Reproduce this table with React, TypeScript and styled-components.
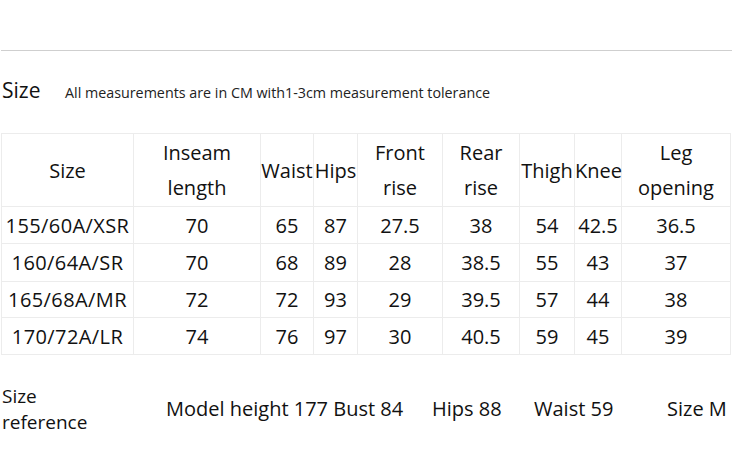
import React from "react";
import styled, { createGlobalStyle } from "styled-components";

const Global = createGlobalStyle`
  html, body { margin: 0; padding: 0; background: #fff; }
  body { font-family: "Open Sans", "Noto Sans", sans-serif; color: #111; }
`;

const Page = styled.div`
  width: 732px;
  height: 459px;
  padding-top: 50px;
  box-sizing: border-box;
  overflow: hidden;
`;

const Rule = styled.div`
  margin-left: 1px;
  height: 1px;
  background: #cfcfcf;
`;

const TitleRow = styled.div`
  display: flex;
  align-items: baseline;
  height: 82px;
  padding-top: 25px;
  box-sizing: border-box;
  padding-left: 2px;
`;

const Title = styled.span`
  font-size: 21px;
  width: 63px;
`;

const Note = styled.span`
  font-size: 14.3px;
  color: #222;
`;

const Table = styled.table`
  margin-left: 1px;
  border-collapse: collapse;
  table-layout: fixed;
  width: 729px;
  font-size: 20px;
  td, th {
    border: 1px solid #ececec;
    padding: 0;
    text-align: center;
    font-weight: 400;
    white-space: nowrap;
  }
`;

const HeadRow = styled.tr`
  height: 73px;
  th { line-height: 35px; }
`;

const BodyRow = styled.tr<{ $h: number }>`
  height: ${(p) => p.$h}px;
`;

const SizeCell = styled.td`
  letter-spacing: 0.4px;
`;

const Footer = styled.div`
  display: grid;
  grid-template-columns: 164px 266px 102px 133px 1fr;
  align-items: center;
  margin-top: 28px;
  padding-left: 2px;
  font-size: 20px;
`;

const FootLabel = styled.div`
  display: flex;
  flex-direction: column;
  line-height: 26px;
  font-size: 19px;
`;

const FootCell = styled.div`
  line-height: 24px;
  white-space: nowrap;
`;

const cols = [132, 127, 53, 44, 85, 77, 55, 47, 109];
const headers = [
  ["Size"],
  ["Inseam", "length"],
  ["Waist"],
  ["Hips"],
  ["Front", "rise"],
  ["Rear", "rise"],
  ["Thigh"],
  ["Knee"],
  ["Leg", "opening"],
];
const rows = [
  ["155/60A/XSR", "70", "65", "87", "27.5", "38", "54", "42.5", "36.5"],
  ["160/64A/SR", "70", "68", "89", "28", "38.5", "55", "43", "37"],
  ["165/68A/MR", "72", "72", "93", "29", "39.5", "57", "44", "38"],
  ["170/72A/LR", "74", "76", "97", "30", "40.5", "59", "45", "39"],
];
const heights = [37, 38, 36, 37];

export default function App() {
  return (
    <Page>
      <Global />
      <Rule />
      <TitleRow>
        <Title>Size</Title>
        <Note>All measurements are in CM with1-3cm measurement tolerance</Note>
      </TitleRow>
      <Table>
        <colgroup>
          {cols.map((w, i) => (
            <col key={i} style={{ width: w }} />
          ))}
        </colgroup>
        <thead>
          <HeadRow>
            {headers.map((h, i) => (
              <th key={i}>
                {h.map((l, j) => (
                  <div key={j}>{l}</div>
                ))}
              </th>
            ))}
          </HeadRow>
        </thead>
        <tbody>
          {rows.map((r, i) => (
            <BodyRow key={i} $h={heights[i]}>
              <SizeCell>{r[0]}</SizeCell>
              {r.slice(1).map((c, j) => (
                <td key={j}>{c}</td>
              ))}
            </BodyRow>
          ))}
        </tbody>
      </Table>
      <Footer>
        <FootLabel>
          <span>Size</span>
          <span>reference</span>
        </FootLabel>
        <FootCell>Model height 177 Bust 84</FootCell>
        <FootCell>Hips 88</FootCell>
        <FootCell>Waist 59</FootCell>
        <FootCell>Size M</FootCell>
      </Footer>
    </Page>
  );
}
